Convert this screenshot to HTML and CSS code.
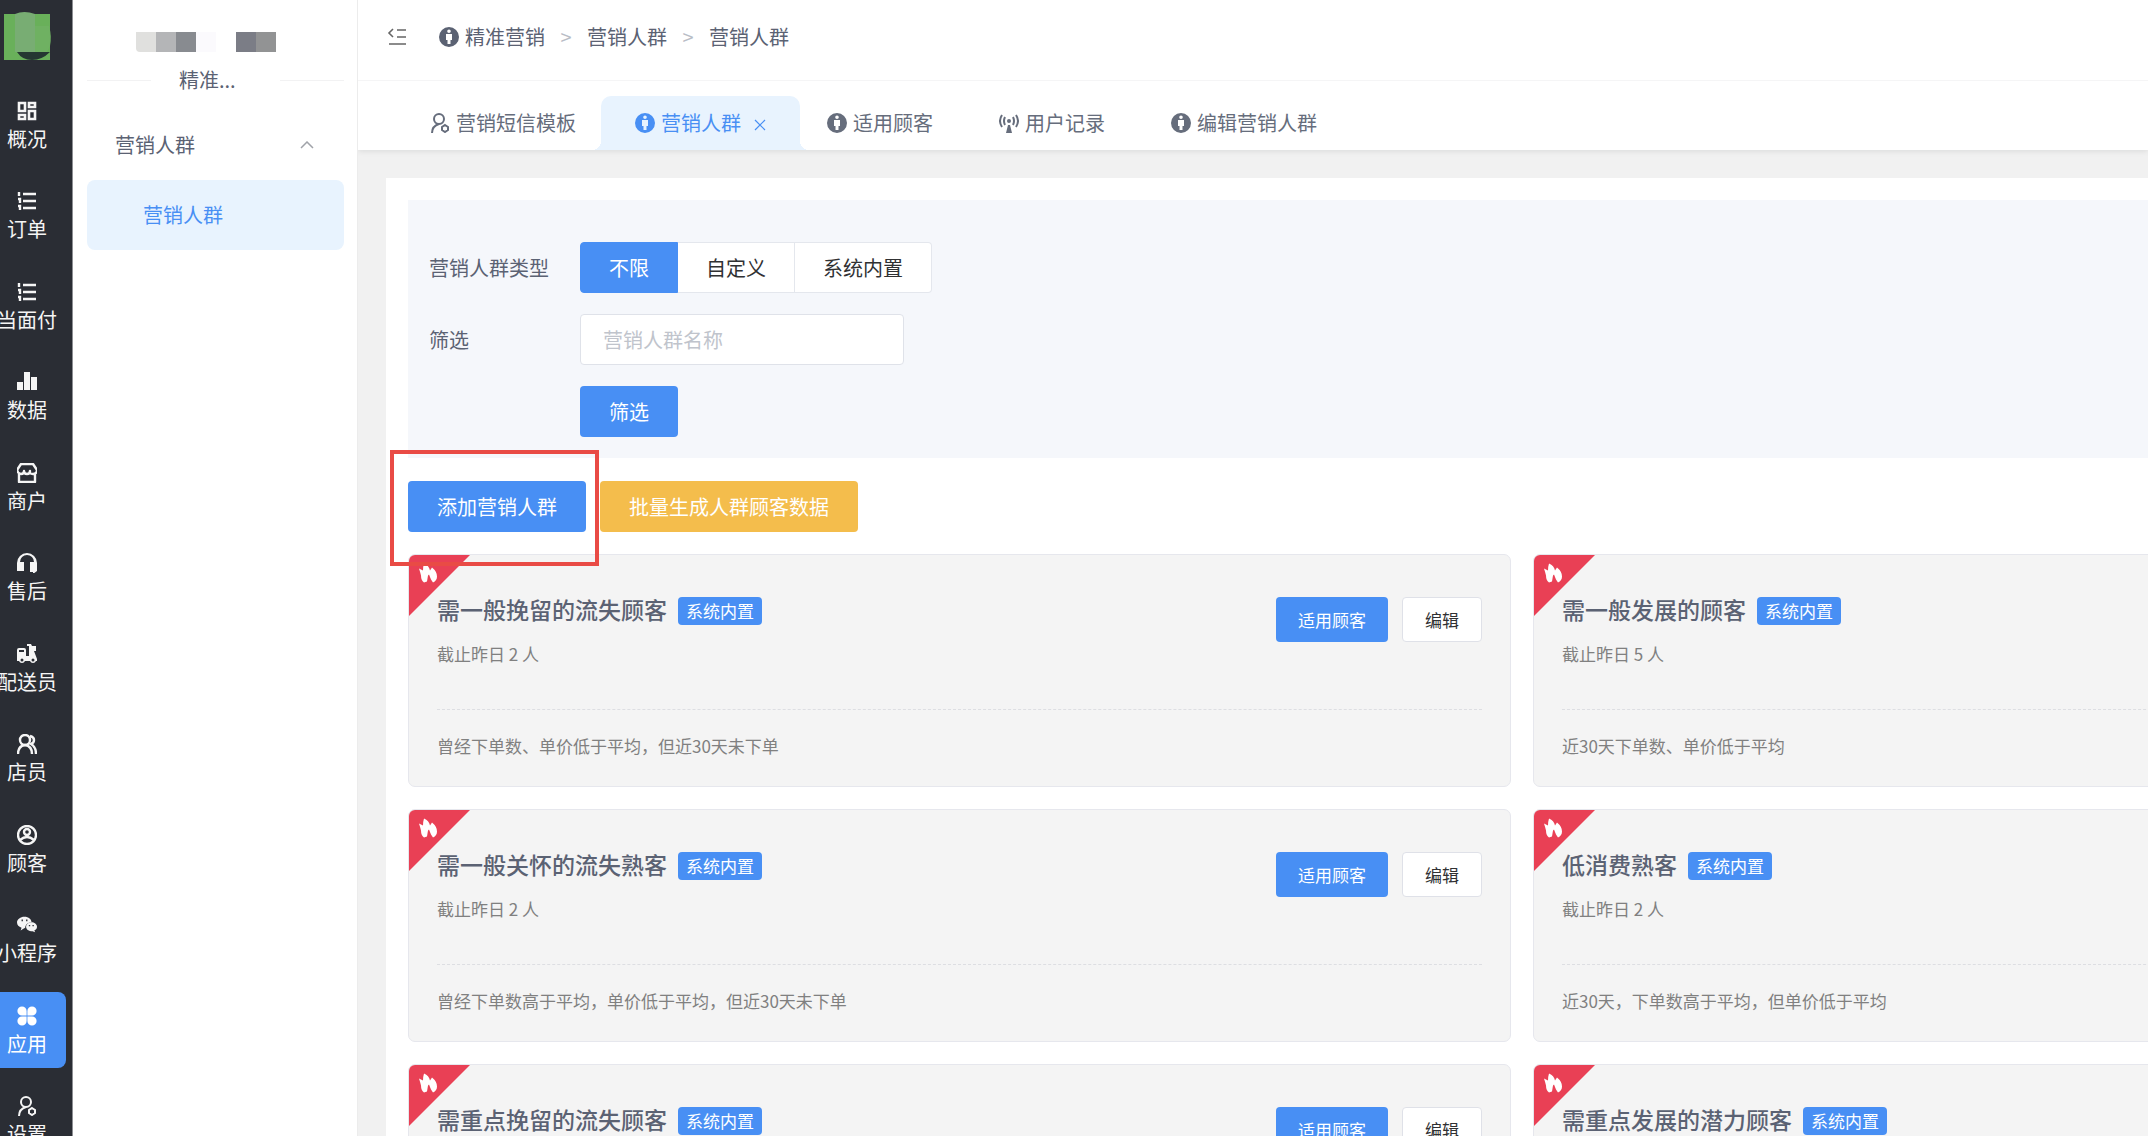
FILE: index.html
```html
<!DOCTYPE html>
<html lang="zh-CN">
<head>
<meta charset="utf-8">
<meta name="viewport" content="width=device-width, initial-scale=1">
<title>营销人群</title>
<link rel="stylesheet" href="styles.css">
</head>
<body>
<svg class="sprite" aria-hidden="true">
  <symbol id="i-grid" viewBox="0 0 20 20"><g fill="none" stroke="currentColor" stroke-width="2.600"><path d="M2 2h6v8H2zM12 2h6v4h-6zM2 14h6v4H2zM12 10h6v8h-6z"/></g></symbol>
  <symbol id="i-list" viewBox="0 0 20 20"><path fill="none" stroke="currentColor" stroke-width="2.400" d="M6 3h13M6 10h13M6 17h13M2 1v4M1 8h2v4M1 15h2v4"/></symbol>
  <symbol id="i-bars" viewBox="0 0 20 20"><path fill="currentColor" d="M0 10h6v8H0zM7 0h6v18H7zM14 5h6v13h-6z"/></symbol>
  <symbol id="i-shop" viewBox="0 0 20 20"><path fill="none" stroke="currentColor" stroke-width="2.400" stroke-linejoin="round" d="M4 1h12l4 6q0 4-4 4t-3-3q0 3-3 3t-3-3q0 3-3 3T0 7zM2 11v8h16v-8"/></symbol>
  <symbol id="i-head" viewBox="0 0 20 20"><path fill="currentColor" d="M0 18V10a10 10 0 0 1 20 0v8l-4 3v-2h-3V9h4a7 7 0 0 0-14 0h4v9z"/></symbol>
  <symbol id="i-moto" viewBox="0 0 20 20"><path fill="currentColor" fill-rule="evenodd" d="M0 6q0-2 2-2h5q2 0 2 2v6h3V2h-2V0h4l1 2h4v5h-2l3 8v2h-1a3.200 3.200 0 0 1-6 0H8a3.200 3.200 0 0 1-6 0H0zm2 0v2h5V6zm3 8.500a1.500 1.500 0 0 0 0 3 1.500 1.500 0 0 0 0-3m11 0a1.500 1.500 0 0 0 0 3 1.500 1.500 0 0 0 0-3"/></symbol>
  <symbol id="i-users" viewBox="0 0 20 20"><g fill="none" stroke="currentColor" stroke-width="2.400"><circle cx="8" cy="6" r="5"/><path d="M1 20q0-8 7-9 7 1 7 9M13 2q4 1 4 4t-3 4q5 3 5 10"/></g></symbol>
  <symbol id="i-member" viewBox="0 0 20 20"><g fill="none" stroke="currentColor" stroke-width="2.400"><circle cx="10" cy="10" r="9"/><circle cx="10" cy="7" r="3"/><path d="M3 15q7-6 14 0"/></g></symbol>
  <symbol id="i-wechat" viewBox="0 0 22 20"><path fill="currentColor" fill-rule="evenodd" d="M8 1c5 0 8 3 8 6-4 0-7 3-7 6l-2 1-3 2 1-3C2 12 0 10 0 7c0-3 4-6 8-6M5 4v2h1.500V4zm5 0v2h1.500V4z"/><path fill="currentColor" fill-rule="evenodd" d="M16 7c3 0 6 2 6 5 0 2-1 3-3 4l1 2-3-1c-4 0-7-2-7-5s3-5 6-5m-3 3v1.500h1.500V10zm4 0v1.500h1.500V10z"/></symbol>
  <symbol id="i-clover" viewBox="0 0 20 20"><path fill="currentColor" d="M9.600 9.600H5A4.600 4.600 0 1 1 9.600 5zM10.400 9.600V5A4.600 4.600 0 1 1 15 9.600zM9.600 10.400V15A4.600 4.600 0 1 1 5 10.400zM10.400 10.400H15A4.600 4.600 0 1 1 10.400 15z"/></symbol>
  <symbol id="i-usercog" viewBox="0 0 20 20"><g fill="none" stroke="currentColor" stroke-width="2"><circle cx="9" cy="6" r="5"/><path d="M2 20q0-7 7-9"/><path d="m15 12 3 2v3l-3 2-3-2v-3z"/></g></symbol>
  <symbol id="i-info" viewBox="0 0 20 20"><path fill="currentColor" fill-rule="evenodd" d="M10 0a10 10 0 1 1 0 20 10 10 0 0 1 0-20m0 2.500a1.800 1.800 0 0 0 0 3.600 1.800 1.800 0 0 0 0-3.600M7 7v6h1.500v4h3v-4H13V7z"/></symbol>
  <symbol id="i-signal" viewBox="0 0 20 20"><g fill="none" stroke="currentColor" stroke-width="2"><path d="M3 2Q-1 8 3 14M17 2q4 6 0 12M6 4Q4 8 6 12M14 4q2 4 0 8"/></g><circle cx="10" cy="8" r="2" fill="currentColor"/><path fill="currentColor" d="M9 12h2l2 8H7z"/></symbol>
  <symbol id="i-fold" viewBox="0 0 20 20"><path fill="none" stroke="currentColor" stroke-width="1.600" d="M6 2 2 6l4 4M10 3h9M10 10h9M2 17h17"/></symbol>
  <symbol id="i-up" viewBox="0 0 14 8"><path fill="none" stroke="currentColor" stroke-width="1.500" d="M1 7l6-6 6 6"/></symbol>
  <symbol id="i-x" viewBox="0 0 12 12"><path fill="none" stroke="currentColor" stroke-width="1.200" d="M1 1l10 10M11 1 1 11"/></symbol>
  <symbol id="i-fire" viewBox="0 0 19 20"><path fill="currentColor" d="M0 5l4 2Q4 3 5 0q5 2 6 7l2-3q5 4 5 9 0 4-4 6l-2-3-2-5-1 1-1 6-3 1Q2 17 2 12 1 8 0 5z"/></symbol>
</svg>

<div class="app">
  <nav class="rail" aria-label="主导航">
    <svg class="logo" viewBox="0 0 48 48" aria-hidden="true"><path fill="#69b05a" d="M0 2h46v46H0z"/><path fill="#253832" d="M1 40h45Q38 48 28 48T13 40z"/><path fill="#6fb162" d="M31 14h14q3 10 1 20l-3 6H31z"/><path fill="#78ad73" d="M11 2q9-4 20 0v38H11z"/></svg>
    <ul class="rail-list">
      <li><a href="#"><svg class="ico"><use href="#i-grid"/></svg><span>概况</span></a></li>
      <li><a href="#"><svg class="ico"><use href="#i-list"/></svg><span>订单</span></a></li>
      <li><a href="#"><svg class="ico"><use href="#i-list"/></svg><span>当面付</span></a></li>
      <li><a href="#"><svg class="ico"><use href="#i-bars"/></svg><span>数据</span></a></li>
      <li><a href="#"><svg class="ico"><use href="#i-shop"/></svg><span>商户</span></a></li>
      <li><a href="#"><svg class="ico"><use href="#i-head"/></svg><span>售后</span></a></li>
      <li><a href="#"><svg class="ico"><use href="#i-moto"/></svg><span>配送员</span></a></li>
      <li><a href="#"><svg class="ico"><use href="#i-users"/></svg><span>店员</span></a></li>
      <li><a href="#"><svg class="ico"><use href="#i-member"/></svg><span>顾客</span></a></li>
      <li><a href="#"><svg class="ico"><use href="#i-wechat"/></svg><span>小程序</span></a></li>
      <li><a href="#" class="on" aria-current="page"><svg class="ico"><use href="#i-clover"/></svg><span>应用</span></a></li>
      <li><a href="#"><svg class="ico"><use href="#i-usercog"/></svg><span>设置</span></a></li>
    </ul>
  </nav>

  <aside class="side">
    <div class="masked" aria-hidden="true"><i class="m1"></i><i class="m2"></i><i class="m3"></i><i class="m4"></i><i></i><i class="m5"></i><i class="m6"></i></div>
    <div class="divider"><span>精准...</span></div>
    <button type="button" class="group"><span>营销人群</span><svg class="chev"><use href="#i-up"/></svg></button>
    <a href="#" class="sub" aria-current="page">营销人群</a>
  </aside>

  <div class="main">
    <header class="head">
      <div class="crumbs">
        <button type="button" class="fold" aria-label="收起菜单"><svg class="ico"><use href="#i-fold"/></svg></button>
        <nav class="trail" aria-label="面包屑">
          <a href="#" class="with-ico"><svg class="ico"><use href="#i-info"/></svg>精准营销</a>
          <span class="sep">&gt;</span>
          <a href="#">营销人群</a>
          <span class="sep">&gt;</span>
          <a href="#">营销人群</a>
        </nav>
      </div>
      <div class="tabs">
        <a href="#" class="tab with-ico"><svg class="ico"><use href="#i-usercog"/></svg>营销短信模板</a>
        <div class="tab active"><a href="#" class="with-ico"><svg class="ico"><use href="#i-info"/></svg>营销人群</a><button type="button" class="close" aria-label="关闭"><svg><use href="#i-x"/></svg></button></div>
        <a href="#" class="tab with-ico"><svg class="ico"><use href="#i-info"/></svg>适用顾客</a>
        <a href="#" class="tab with-ico"><svg class="ico"><use href="#i-signal"/></svg>用户记录</a>
        <a href="#" class="tab with-ico"><svg class="ico"><use href="#i-info"/></svg>编辑营销人群</a>
      </div>
    </header>

    <main class="body">
      <section class="panel">
        <form class="filter">
          <div class="row" role="radiogroup" aria-labelledby="type-label">
            <span class="label" id="type-label">营销人群类型</span>
            <div class="radios">
              <label><input type="radio" name="type" checked><span>不限</span></label>
              <label><input type="radio" name="type"><span>自定义</span></label>
              <label><input type="radio" name="type"><span>系统内置</span></label>
            </div>
          </div>
          <div class="row">
            <label class="label" for="kw">筛选</label>
            <input class="text" id="kw" type="text" placeholder="营销人群名称">
          </div>
          <div class="row">
            <span class="label"></span>
            <button type="button" class="btn primary">筛选</button>
          </div>
        </form>

        <div class="actions">
          <div class="marked"><button type="button" class="btn primary">添加营销人群</button></div>
          <button type="button" class="btn warn">批量生成人群顾客数据</button>
        </div>

        <div class="cards">
          <article class="card">
            <div class="ribbon"><svg><use href="#i-fire"/></svg></div>
            <div class="top"><div><h2>需一般挽留的流失顾客<span class="tag">系统内置</span></h2><p class="count">截止昨日 2 人</p></div>
            <div class="ops"><button type="button" class="btn small primary">适用顾客</button><button type="button" class="btn small plain">编辑</button></div></div>
            <p class="desc">曾经下单数、单价低于平均，但近30天未下单</p>
          </article>
          <article class="card">
            <div class="ribbon"><svg><use href="#i-fire"/></svg></div>
            <div class="top"><div><h2>需一般发展的顾客<span class="tag">系统内置</span></h2><p class="count">截止昨日 5 人</p></div>
            <div class="ops"><button type="button" class="btn small primary">适用顾客</button><button type="button" class="btn small plain">编辑</button></div></div>
            <p class="desc">近30天下单数、单价低于平均</p>
          </article>
          <article class="card">
            <div class="ribbon"><svg><use href="#i-fire"/></svg></div>
            <div class="top"><div><h2>需一般关怀的流失熟客<span class="tag">系统内置</span></h2><p class="count">截止昨日 2 人</p></div>
            <div class="ops"><button type="button" class="btn small primary">适用顾客</button><button type="button" class="btn small plain">编辑</button></div></div>
            <p class="desc">曾经下单数高于平均，单价低于平均，但近30天未下单</p>
          </article>
          <article class="card">
            <div class="ribbon"><svg><use href="#i-fire"/></svg></div>
            <div class="top"><div><h2>低消费熟客<span class="tag">系统内置</span></h2><p class="count">截止昨日 2 人</p></div>
            <div class="ops"><button type="button" class="btn small primary">适用顾客</button><button type="button" class="btn small plain">编辑</button></div></div>
            <p class="desc">近30天，下单数高于平均，但单价低于平均</p>
          </article>
          <article class="card">
            <div class="ribbon"><svg><use href="#i-fire"/></svg></div>
            <div class="top"><div><h2>需重点挽留的流失顾客<span class="tag">系统内置</span></h2></div>
            <div class="ops"><button type="button" class="btn small primary">适用顾客</button><button type="button" class="btn small plain">编辑</button></div></div>
          </article>
          <article class="card">
            <div class="ribbon"><svg><use href="#i-fire"/></svg></div>
            <div class="top"><div><h2>需重点发展的潜力顾客<span class="tag">系统内置</span></h2></div>
            <div class="ops"><button type="button" class="btn small primary">适用顾客</button><button type="button" class="btn small plain">编辑</button></div></div>
          </article>
        </div>
      </section>
    </main>
  </div>
</div>
</body>
</html>
```
FILE: styles.css
```css
:root {
  --blue: #488ff4;
  --blue-light: #e8f3fe;
  --ink: #5b6273;
  --line: #e4e7ed;
}

* { box-sizing: border-box; }

body {
  margin: 0;
  font: 20px/28px "Noto Sans CJK SC", "Noto Sans", sans-serif;
  color: var(--ink);
  background: #f1f1f1;
}

a { color: inherit; text-decoration: none; }
button, input { font: inherit; color: inherit; }
button { border: 0; padding: 0; background: none; cursor: pointer; }
h2, p, ul { margin: 0; padding: 0; }
ul { list-style: none; }

.sprite { display: none; }
.ico { width: 20px; height: 20px; flex: none; overflow: visible; }

.app { display: flex; height: 100vh; overflow: hidden; }

/* Dark icon rail */
.rail {
  flex: none;
  width: 73px;
  overflow: hidden;
  background: #2a2d34;
  border-right: 1px solid #8d8f93;
  color: #f5f5f5;
}
.logo { display: block; width: 48px; height: 48px; margin: 12px 0 27px 4px; }
.rail-list li { margin-bottom: 14px; }
.rail-list li:nth-child(even) { margin-bottom: 15px; }
.rail-list a {
  display: flex;
  flex-direction: column;
  align-items: center;
  gap: 4px;
  width: 66px;
  height: 76px;
  padding: 14px 12px 0 0;
  white-space: nowrap;
}
.rail-list .on { background: var(--blue); border-radius: 0 8px 8px 0; color: #fff; }

/* Second-level menu */
.side {
  flex: none;
  width: 285px;
  padding: 32px 13px 0 14px;
  background: #fff;
  border-right: 1px solid #ececec;
}
.masked { display: flex; height: 20px; margin-left: 49px; }
.masked i { width: 20px; }
.m1 { background: #e0e0de; border-radius: 0 0 0 4px; }
.m2 { background: #b4b5b7; }
.m3 { background: #888b90; }
.m4 { background: #fbfafd; }
.m5 { background: #7b7d86; }
.m6 { background: #929394; }
.divider { display: flex; align-items: center; margin-top: 14px; }
.divider span { flex: 1; padding: 0 28px; white-space: nowrap; }
.divider::before, .divider::after { content: ""; width: 64px; height: 1px; background: #f2f2f3; }
.group {
  display: flex;
  align-items: center;
  justify-content: space-between;
  width: 100%;
  height: 70px;
  margin-top: 16px;
  padding: 0 30px 0 28px;
}
.chev { width: 14px; height: 8px; color: #a0a3a9; }
.sub {
  display: flex;
  align-items: center;
  height: 70px;
  padding-left: 56px;
  border-radius: 8px;
  background: var(--blue-light);
  color: var(--blue);
}

/* Header */
.main { flex: 1; min-width: 0; overflow: hidden; }
.head { position: relative; background: #fff; box-shadow: 0 1px 6px rgba(0, 21, 20, .1); }
.crumbs {
  display: flex;
  align-items: center;
  height: 81px;
  padding: 0 29px 6px;
  border-bottom: 1px solid #f5f5f6;
}
.fold { display: flex; color: #666; }
.trail { display: flex; align-items: center; margin-left: 32px; }
.sep { width: 42px; text-align: center; color: #b9bdc6; }
.with-ico { display: flex; align-items: center; gap: 6px; }
.tabs { display: flex; height: 69px; padding: 15px 39px 0; }
.tab { display: flex; align-items: center; padding: 0 33px; color: #666d7c; }
.tab.active {
  position: relative;
  margin: 0 -6px 0 -8px;
  padding: 0 34px;
  border-radius: 10px 10px 0 0;
  background: var(--blue-light);
  color: var(--blue);
}
.tab.active::before, .tab.active::after {
  content: "";
  position: absolute;
  bottom: 0;
  width: 9px;
  height: 9px;
}
.tab.active::before { right: 100%; background: radial-gradient(circle at 0 0, transparent 9px, var(--blue-light) 9px); }
.tab.active::after { left: 100%; background: radial-gradient(circle at 100% 0, transparent 9px, var(--blue-light) 9px); }
.close { display: flex; margin-left: 13px; padding-top: 4px; }
.close svg { width: 12px; height: 12px; }

/* Content; below two full card widths it runs past the window */
.body { padding: 28px 0 28px 28px; }
.panel { width: max-content; min-width: 100%; padding: 22px; background: #fff; }
.filter {
  display: flex;
  flex-direction: column;
  gap: 21px;
  padding: 42px 21px 21px;
  background: #f5f7fb;
}
.row { display: flex; align-items: center; }
.label { width: 151px; }
.radios { display: flex; }
.radios input { position: absolute; opacity: 0; }
.radios span {
  display: block;
  padding: 11px 28px 10px;
  border: 1px solid var(--line);
  border-left: 0;
  background: #fff;
  color: #303133;
}
.radios label:last-child span { border-radius: 0 4px 4px 0; }
.radios label:first-child span { border-left: 1px solid var(--line); border-radius: 4px 0 0 4px; }
.radios label input:checked + span { background: var(--blue); border-color: var(--blue); color: #fff; }
.text {
  width: 324px;
  height: 51px;
  padding: 0 22px;
  border: 1px solid #dfe2e9;
  border-radius: 4px;
  background: #fff;
}
.text::placeholder { color: #c0c4cc; opacity: 1; }

.btn { height: 51px; padding: 0 29px; border-radius: 4px; }
.primary { background: var(--blue); color: #fff; }
.warn { background: #f4bd4c; color: #fff; }
.plain { background: #fff; border: 1px solid #dfe1e8; color: #303133; }
.small { height: 45px; padding: 0 22px; font-size: 17px; }

.actions { display: flex; gap: 14px; margin: 23px 0 22px; }
.marked { position: relative; }
.marked::after {
  content: "";
  position: absolute;
  z-index: 2;
  inset: -31px -13px -34px -18px;
  border: 4px solid #e94b45;
  pointer-events: none;
}

/* Crowd cards */
.cards { display: grid; grid-template-columns: repeat(2, minmax(1103px, 1fr)); gap: 22px; }
.card {
  position: relative;
  min-height: 233px;
  padding: 42px 28px 26px;
  border: 1px solid #e6e7ed;
  border-radius: 7px;
  background: #f4f4f4;
  overflow: hidden;
}
.ribbon {
  position: absolute;
  top: 0;
  left: 0;
  width: 61px;
  height: 61px;
  padding: 8px 10px;
  background: #e94055;
  clip-path: polygon(0 0, 100% 0, 0 100%);
  color: #fff;
}
.ribbon svg { display: block; width: 19px; height: 21px; }
.top { display: flex; justify-content: space-between; align-items: flex-start; height: 113px; border-bottom: 1px dashed #dddee2; }
h2 { display: flex; align-items: flex-start; font-size: 23px; font-weight: 500; line-height: 24px; }
.tag {
  margin-left: 11px;
  padding: 0 8px;
  border-radius: 4px;
  background: var(--blue);
  color: #fff;
  font-size: 17px;
  font-weight: 400;
  line-height: 28px;
}
.count, .desc { font-size: 17px; line-height: 24px; color: #808080; }
.count { margin-top: 17px; }
.desc { margin-top: 24px; }
.ops { display: flex; gap: 14px; }
```
